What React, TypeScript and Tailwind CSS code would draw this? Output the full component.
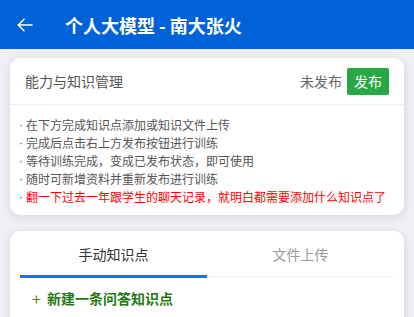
import React from "react";

export default function App() {
  const font = { fontFamily: '"Noto Sans CJK SC", "Noto Sans", sans-serif' };
  const tips = [
    "在下方完成知识点添加或知识文件上传",
    "完成后点击右上方发布按钮进行训练",
    "等待训练完成，变成已发布状态，即可使用",
    "随时可新增资料并重新发布进行训练",
  ];
  const Dot = () => (
    <span className="w-[7px] shrink-0 font-['Liberation_Sans',sans-serif]">·</span>
  );
  return (
    <div className="w-[414px] h-[317px] overflow-hidden bg-[#eef0f5]" style={font}>
      <div className="h-[49px] bg-[#0062d9] flex items-center">
        <svg className="ml-[17px]" width="16" height="14" viewBox="0 0 16 14" fill="none" stroke="white" strokeWidth="1.6" strokeLinecap="round" strokeLinejoin="round">
          <path d="M15 7H1.5M7 1.2L1.2 7L7 12.8" />
        </svg>
        <div className="ml-[32px] text-white text-[18px] font-bold leading-none">个人大模型 - 南大张火</div>
      </div>
      <div className="px-[10px] pt-[9px]">
        <div className="bg-white rounded-[10px] shadow-[0_2px_10px_rgba(0,0,0,0.12)]">
          <div className="h-[47px] flex items-center justify-between pl-[15px] pr-[15px] border-b border-[#eeeeee]">
            <div className="text-[14px] text-[#555] leading-none">能力与知识管理</div>
            <div className="flex items-center">
              <span className="text-[14px] text-[#666] leading-none">未发布</span>
              <div className="ml-[5px] w-[42px] h-[27px] bg-[#28a745] rounded-[2px] flex items-center justify-center text-white text-[14px] leading-none">发布</div>
            </div>
          </div>
          <div className="pl-[9px] pt-[11px] pb-[9px] text-[12px] leading-[18px]">
            {tips.map((t) => (
              <div key={t} className="text-[#555] flex">
                <Dot />
                <span>{t}</span>
              </div>
            ))}
            <div className="text-[#ff0000] flex">
              <Dot />
              <span>翻一下过去一年跟学生的聊天记录，就明白都需要添加什么知识点了</span>
            </div>
          </div>
        </div>
        <div className="mt-[16px] bg-white rounded-[10px] shadow-[0_2px_10px_rgba(0,0,0,0.12)] px-[10px] h-[120px]">
          <div className="flex">
            <div className="flex-1 flex flex-col items-center">
              <div className="pt-[14px] h-[44px] text-[14px] text-[#333] leading-[18px]">手动知识点</div>
              <div className="w-full h-[3px] bg-[#007bff]" />
            </div>
            <div className="flex-1 flex flex-col items-center">
              <div className="pt-[14px] h-[44px] text-[14px] text-[#999] leading-[18px]">文件上传</div>
              <div className="w-full h-[3px] flex items-center"><div className="w-full h-[1px] bg-[#eeeeee]" /></div>
            </div>
          </div>
          <div className="mt-[11px] pl-[12px] flex items-center text-[14px] font-bold text-[#1f7a12] leading-[18px]">
            <span className="font-normal text-[16px] text-[#6b7a1c] mr-[6px]">+</span>
            <span>新建一条问答知识点</span>
          </div>
        </div>
      </div>
    </div>
  );
}
